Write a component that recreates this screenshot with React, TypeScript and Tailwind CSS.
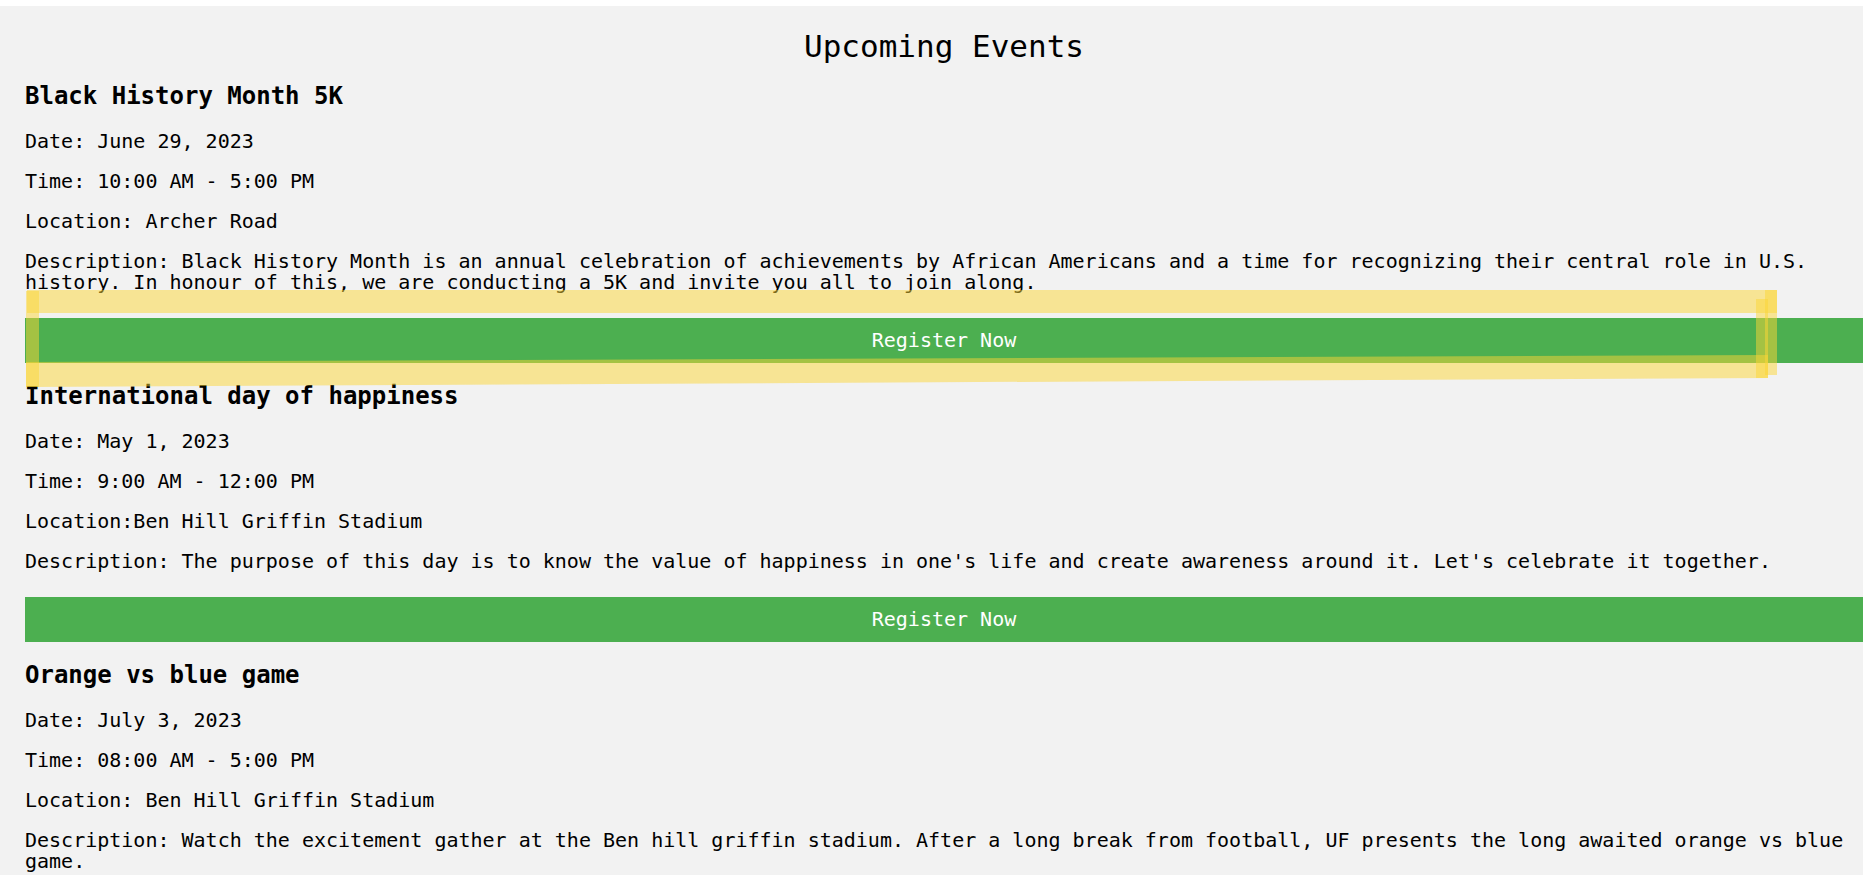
import React from "react";

type EventItem = {
  title: string;
  date: string;
  time: string;
  location: string;
  description: string;
};

const events: EventItem[] = [
  {
    title: "Black History Month 5K",
    date: "Date: June 29, 2023",
    time: "Time: 10:00 AM - 5:00 PM",
    location: "Location: Archer Road",
    description:
      "Description: Black History Month is an annual celebration of achievements by African Americans and a time for recognizing their central role in U.S. history. In honour of this, we are conducting a 5K and invite you all to join along.",
  },
  {
    title: "International day of happiness",
    date: "Date: May 1, 2023",
    time: "Time: 9:00 AM - 12:00 PM",
    location: "Location:Ben Hill Griffin Stadium",
    description:
      "Description: The purpose of this day is to know the value of happiness in one's life and create awareness around it. Let's celebrate it together.",
  },
  {
    title: "Orange vs blue game",
    date: "Date: July 3, 2023",
    time: "Time: 08:00 AM - 5:00 PM",
    location: "Location: Ben Hill Griffin Stadium",
    description:
      "Description: Watch the excitement gather at the Ben hill griffin stadium. After a long break from football, UF presents the long awaited orange vs blue game.",
  },
];

function Event({ e, first }: { e: EventItem; first: boolean }) {
  return (
    <section className={first ? "" : "mt-[19px]"}>
      <h3 className="text-[24px] font-bold leading-[28px]">{e.title}</h3>
      <p className="mt-[21px] text-[20px] leading-[21px]">{e.date}</p>
      <p className="mt-[19px] text-[20px] leading-[21px]">{e.time}</p>
      <p className="mt-[19px] text-[20px] leading-[21px]">{e.location}</p>
      <p className="mt-[19px] text-[20px] leading-[21px]">{e.description}</p>
      <button className="mt-[25px] block w-full h-[45px] bg-[#4caf50] text-white text-[20px] leading-[21px] border-0">
        Register Now
      </button>
    </section>
  );
}

export default function App() {
  return (
    <div className="relative min-h-screen overflow-hidden bg-[#f2f2f2] text-black font-['DejaVu_Sans_Mono','Liberation_Mono',monospace]">
      <div className="h-[6px] bg-white" />
      <div className="ml-[25px] w-[1838px] pb-[40px]">
        <h1 className="pt-[22px] text-center text-[31px] leading-[36px] font-normal">
          Upcoming Events
        </h1>
        <div className="mt-[18px]">
          {events.map((e, i) => (
            <Event key={e.title} e={e} first={i === 0} />
          ))}
        </div>
      </div>
      <svg
        className="pointer-events-none absolute left-0 top-0"
        width="1863"
        height="875"
        viewBox="0 0 1863 875"
      >
        <g fill="#fcd535" fillOpacity="0.5">
          <rect x="27" y="290" width="1750" height="23" />
          <polygon points="26,362 1768,355 1768,378 26,387" />
          <rect x="26" y="291" width="13" height="96" />
          <rect x="1765" y="290" width="12" height="85" />
          <rect x="1756" y="299" width="12" height="79" />
        </g>
      </svg>
    </div>
  );
}
